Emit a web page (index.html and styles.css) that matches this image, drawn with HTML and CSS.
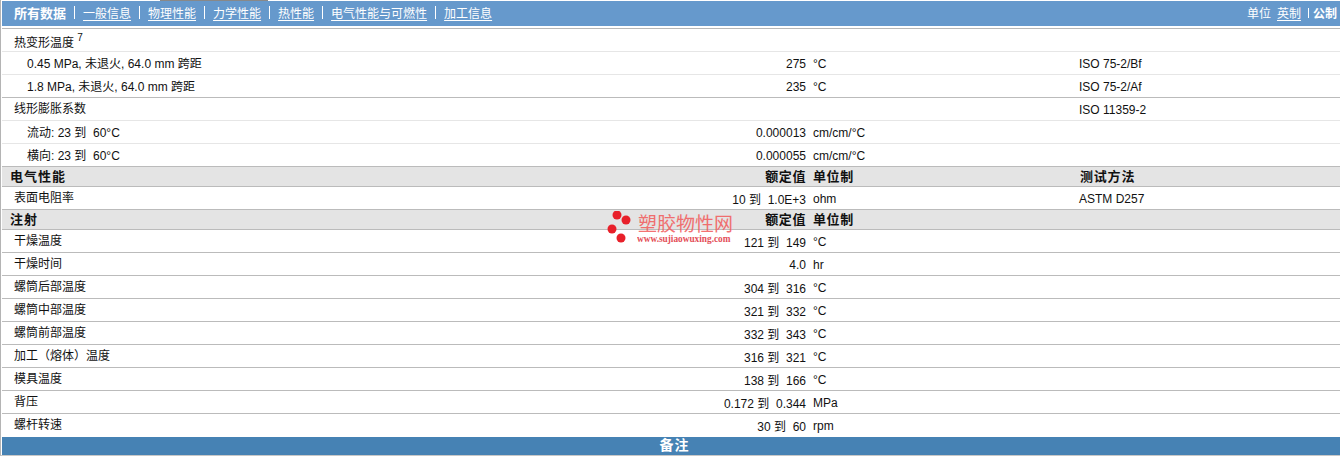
FILE: index.html
```html
<!DOCTYPE html>
<html lang="zh">
<head>
<meta charset="utf-8">
<title>塑胶物性</title>
<link rel="stylesheet" href="styles.css">
</head>
<body>
<div class="page">
  <div class="top-strip"></div>
  <div class="topbar">
    <nav class="nav">
      <b class="nav-item">所有数据</b><span class="sep"></span>
      <a class="nav-item">一般信息</a><span class="sep"></span>
      <a class="nav-item">物理性能</a><span class="sep"></span>
      <a class="nav-item">力学性能</a><span class="sep"></span>
      <a class="nav-item">热性能</a><span class="sep"></span>
      <a class="nav-item">电气性能与可燃性</a><span class="sep"></span>
      <a class="nav-item">加工信息</a>
    </nav>
    <div class="units">
      <span>单位</span><a class="unit-link">英制</a><span class="sep small"></span><b>公制</b>
    </div>
  </div>
  <div class="table">
    <div class="row light first"><div class="name">热变形温度 <sup class="note">7</sup></div><div class="val"></div><div class="unit"></div><div class="method"></div></div>
    <div class="row light"><div class="name sub">0.45 MPa, 未退火, 64.0 mm 跨距</div><div class="val">275</div><div class="unit">°C</div><div class="method">ISO 75-2/Bf</div></div>
    <div class="row"><div class="name sub">1.8 MPa, 未退火, 64.0 mm 跨距</div><div class="val">235</div><div class="unit">°C</div><div class="method">ISO 75-2/Af</div></div>
    <div class="row light"><div class="name">线形膨胀系数</div><div class="val"></div><div class="unit"></div><div class="method">ISO 11359-2</div></div>
    <div class="row light"><div class="name sub">流动: 23 到&nbsp; 60°C</div><div class="val">0.000013</div><div class="unit">cm/cm/°C</div><div class="method"></div></div>
    <div class="row"><div class="name sub">横向: 23 到&nbsp; 60°C</div><div class="val">0.000055</div><div class="unit">cm/cm/°C</div><div class="method"></div></div>
    <div class="row head"><div class="name">电气性能</div><div class="val">额定值</div><div class="unit">单位制</div><div class="method">测试方法</div></div>
    <div class="row"><div class="name">表面电阻率</div><div class="val range">10 到&nbsp; 1.0E+3</div><div class="unit">ohm</div><div class="method">ASTM D257</div></div>
    <div class="row head"><div class="name">注射</div><div class="val">额定值</div><div class="unit">单位制</div><div class="method"></div></div>
    <div class="row"><div class="name">干燥温度</div><div class="val range">121 到&nbsp; 149</div><div class="unit">°C</div><div class="method"></div></div>
    <div class="row"><div class="name">干燥时间</div><div class="val">4.0</div><div class="unit">hr</div><div class="method"></div></div>
    <div class="row"><div class="name">螺筒后部温度</div><div class="val range">304 到&nbsp; 316</div><div class="unit">°C</div><div class="method"></div></div>
    <div class="row"><div class="name">螺筒中部温度</div><div class="val range">321 到&nbsp; 332</div><div class="unit">°C</div><div class="method"></div></div>
    <div class="row"><div class="name">螺筒前部温度</div><div class="val range">332 到&nbsp; 343</div><div class="unit">°C</div><div class="method"></div></div>
    <div class="row"><div class="name">加工（熔体）温度</div><div class="val range">316 到&nbsp; 321</div><div class="unit">°C</div><div class="method"></div></div>
    <div class="row"><div class="name">模具温度</div><div class="val range">138 到&nbsp; 166</div><div class="unit">°C</div><div class="method"></div></div>
    <div class="row"><div class="name">背压</div><div class="val range">0.172 到&nbsp; 0.344</div><div class="unit">MPa</div><div class="method"></div></div>
    <div class="row last"><div class="name">螺杆转速</div><div class="val range">30 到&nbsp; 60</div><div class="unit">rpm</div><div class="method"></div></div>
  </div>
  <div class="notes">备注</div>
  <div class="watermark">
    <svg class="wm-logo" width="26" height="34" viewBox="0 0 26 34"><circle cx="10" cy="4" r="4.5" fill="#e8202a"/><circle cx="19" cy="9" r="4.5" fill="#e8202a"/><circle cx="5" cy="18" r="4.5" fill="#e8202a"/><circle cx="14" cy="27" r="4.5" fill="#e8202a"/></svg>
    <div class="wm-text">
      <div class="wm-title">塑胶物性网</div>
      <div class="wm-url">www.sujiaowuxing.com</div>
    </div>
  </div>
</div>
</body>
</html>
```

FILE: styles.css
```css
* { box-sizing: border-box; }
html, body { margin: 0; padding: 0; background: #fff; }
body {
  width: 1340px;
  height: 456px;
  overflow: hidden;
  font-family: "Liberation Sans", "Noto Sans CJK SC", sans-serif;
  font-size: 12px;
  color: #111;
}
.page {
  position: relative;
  height: 456px;
  padding-top: 1px;
  padding-left: 1px;
  border-left: 1px solid #b4b4b4;
  border-bottom: 1px solid #c8c8c8;
}
.top-strip {
  position: absolute;
  left: 159px;
  top: 0;
  width: 108px;
  height: 1px;
  background: #888;
}
.topbar {
  display: flex;
  justify-content: space-between;
  align-items: center;
  height: 25px;
  background: #6699cc;
  color: #fff;
  padding: 0 3px 2px 12px;
  font-size: 12px;
}
.nav { display: flex; align-items: center; }
.nav-item { text-decoration: underline; text-underline-offset: 2px; white-space: nowrap; }
b.nav-item { text-decoration: none; font-size: 13px; }
.sep { width: 1px; height: 13px; background: #fff; margin: 0 8px; }
.units { display: flex; align-items: center; }
.unit-link { text-decoration: underline; margin-left: 6px; text-underline-offset: 2px; }
.sep.small { height: 10px; margin: 0 4px 0 7px; }
.units b { font-size: 12px; }
.table { margin-top: 2px; border-top: 1px solid #b8b8b8; }
.row {
  display: flex;
  align-items: center;
  height: 23px;
  border-bottom: 1px solid #bbb;
}
.row.light { border-bottom-color: #e6e6e6; }
.row.last { border-bottom: 0; height: 22px; }
.name { width: 713px; padding: 0 0 4px 12px; white-space: nowrap; }
.name.sub { padding: 0 0 2px 25px; }
.row.first .name { padding-bottom: 0; padding-top: 2px; }
.val { width: 91px; padding-top: 2px; text-align: right; white-space: nowrap; }
.val.range { padding-top: 0; }
.unit { width: 273px; padding: 2px 0 0 7px; white-space: nowrap; }
.method { flex: 1; padding-top: 2px; white-space: nowrap; }
.note { font-size: 10px; line-height: 0; vertical-align: 6px; }
.row.head {
  height: 20px;
  background: #e4e4e4;
  font-size: 13px;
  font-weight: 700;
}
.row.head .name { padding: 0 0 3px 8px; letter-spacing: 1px; }
.row.head .val { padding: 0 0 3px; letter-spacing: 0.6px; }
.row.head .unit { padding: 0 0 3px 7px; letter-spacing: 0.6px; }
.row.head .method { padding: 0 0 3px 1px; letter-spacing: 0.8px; }
.notes {
  height: 18px;
  margin-top: 1px;
  background: #4682b4;
  color: #fff;
  font-size: 14px;
  font-weight: 700;
  line-height: 17px;
  text-align: center;
  letter-spacing: 1px;
  padding-left: 7px;
}
.watermark {
  position: absolute;
  left: 606px;
  top: 211px;
  display: flex;
  align-items: flex-start;
  gap: 4px;
  pointer-events: none;
}
.wm-text { display: flex; flex-direction: column; opacity: 0.85; }
.wm-title { font-size: 19px; line-height: 20px; margin-top: 4px; color: #f25a5a; margin-left: 1px; }
.wm-url { font-family: "Liberation Serif", serif; font-size: 9.3px; font-weight: 700; line-height: 9px; color: #e0303a; white-space: nowrap; }
```
